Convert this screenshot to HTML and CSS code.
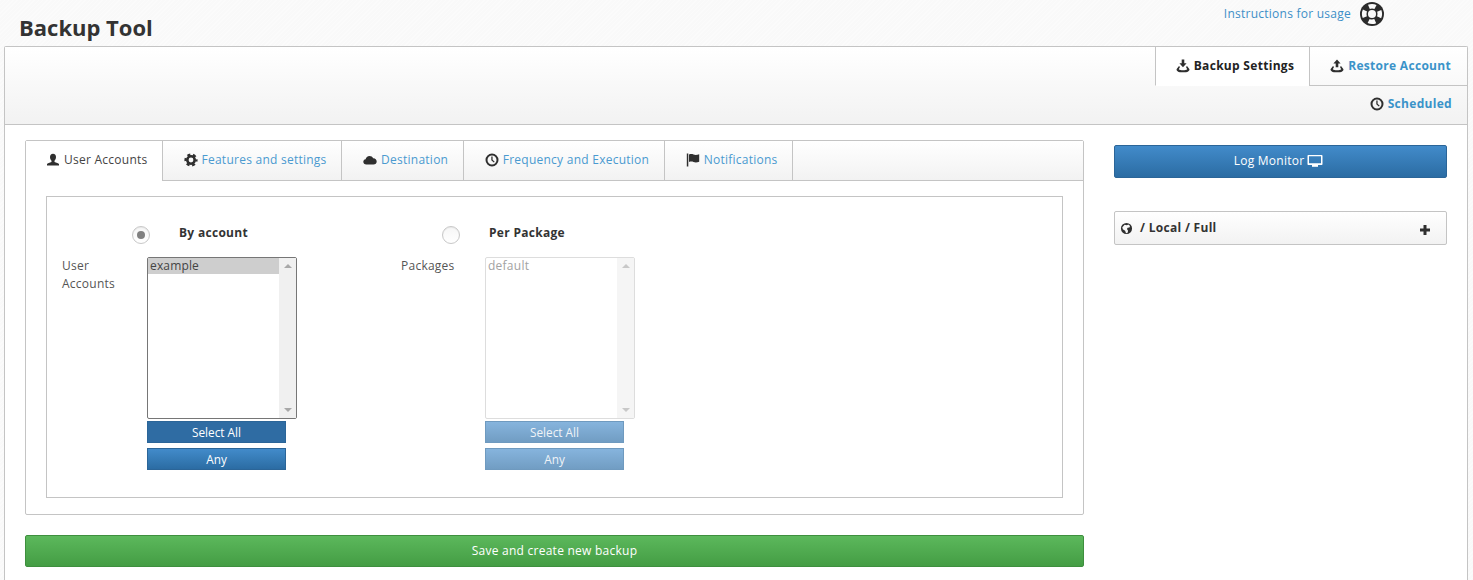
FILE: index.html
```html
<!DOCTYPE html>
<html lang="en">
<head>
<meta charset="utf-8">
<title>Backup Tool</title>
<link rel="stylesheet" href="styles.css">
</head>
<body>
<svg class="defs" width="0" height="0" aria-hidden="true">
  <defs>
    <symbol id="i-tray-down" viewBox="0 0 14 14"><path d="M5.700.5h2.600v3.700h2.300L7 8.300 3.400 4.200h2.300z"/><path d="M3 7 .5 10.300c0 1.700 1.700 2.900 3.500 2.900h6c1.800 0 3.500-1.200 3.500-2.900L11 7l-1 1.100 1.200 2.200c-.9.800-2.200 1-4.200 1s-3.300-.2-4.200-1L4 8.100z"/></symbol>
    <symbol id="i-tray-up" viewBox="0 0 14 14"><path d="M7 .5l3.600 4.100H8.300v3.700H5.700V4.600H3.400z"/><path d="M3 7 .5 10.300c0 1.700 1.700 2.900 3.500 2.900h6c1.800 0 3.500-1.200 3.500-2.900L11 7l-1 1.100 1.200 2.200c-.9.800-2.200 1-4.200 1s-3.300-.2-4.200-1L4 8.100z"/></symbol>
    <symbol id="i-clock" viewBox="0 0 14 14"><path fill-rule="evenodd" d="M7 .5a6.500 6.500 0 1 0 0 13 6.500 6.500 0 0 0 0-13zm0 2a4.500 4.500 0 1 1 0 9 4.500 4.500 0 0 1 0-9z"/><path d="M6.300 3.500h1.300v3.200l2.100 2-.9.900-2.500-2.400z"/></symbol>
    <symbol id="i-user" viewBox="0 0 14 14"><path d="M7 .8c2 0 3 1.400 3 3.300 0 1.600-.8 3-1.500 3.700v1.100c1.800.5 4 1.200 4.500 2.100v1.500H1V11c.5-.9 2.700-1.600 4.500-2.100V7.800C4.800 7.100 4 5.700 4 4.100 4 2.200 5 .8 7 .8z"/></symbol>
    <symbol id="i-gear" viewBox="0 0 14 14"><circle cx="7" cy="7" r="3.700" fill="none" stroke="#2f2f2f" stroke-width="2.600"/><circle cx="7" cy="7" r="5.500" fill="none" stroke="#2f2f2f" stroke-width="2.200" stroke-dasharray="3 2.760" stroke-dashoffset="1.500"/></symbol>
    <symbol id="i-cloud" viewBox="0 0 14 14"><path d="M3.300 11.500C1.500 11.500.3 10.300.3 8.800c0-1.400 1-2.400 2.300-2.600C3 4.400 4.500 3 6.500 3c1.700 0 3 .9 3.600 2.300 2-.2 3.600 1.300 3.600 3.100 0 1.800-1.400 3.100-3.200 3.100z"/></symbol>
    <symbol id="i-flag" viewBox="0 0 14 14"><path d="M.8.500h1.500v13H.8z"/><path d="M3 1.500c1.500-.5 3-.6 4.500 0s3.500.5 5.700-.2v7.500c-2.200.8-4.200.8-5.700.2s-3-.5-4.500 0z"/></symbol>
    <symbol id="i-monitor" viewBox="0 0 16 14"><path fill-rule="evenodd" d="M1.500 1h13c.6 0 1 .4 1 1v8c0 .6-.4 1-1 1h-13c-.6 0-1-.4-1-1V2c0-.6.4-1 1-1zM2 2.200v7h12v-7z"/><path d="M5 11h6v1.800H5z"/></symbol>
    <symbol id="i-globe" viewBox="0 0 14 14"><path fill-rule="evenodd" d="M7 1a6 6 0 1 0 0 12A6 6 0 0 0 7 1zM5 3l2.500.5L9 2.800l1.800 1.400-.6 1.700-2 .3-.7 1.300 1.200 1.800-.5 2.200-1.700.5-1-2.500-2.500-1.600-.5-2.300z"/></symbol>
    <symbol id="i-plus" viewBox="0 0 12 12"><path d="M4.500 1h3v3.500H11v3H7.500V11h-3V7.500H1v-3h3.500z"/></symbol>
  </defs>
</svg>

<header class="top">
  <h1 class="title">Backup Tool</h1>
  <div class="help">
    <a class="link" href="#">Instructions for usage</a>
    <svg class="lifebuoy" viewBox="0 0 26 26" width="26" height="26" aria-hidden="true">
      <circle cx="13" cy="13" r="12" fill="#2b2b2b"/>
      <circle cx="13" cy="13" r="7.800" fill="none" stroke="#fafafa" stroke-width="4.600" stroke-dasharray="6.800 5.450" stroke-dashoffset="3.400"/>
      <circle cx="13" cy="13" r="4" fill="#fafafa"/>
    </svg>
  </div>
</header>

<main class="panel">
  <div class="panel-head">
    <nav class="main-tabs">
      <a class="main-tab active" href="#"><svg class="ico"><use href="#i-tray-down"/></svg>Backup Settings</a>
      <a class="main-tab" href="#"><svg class="ico"><use href="#i-tray-up"/></svg><span class="blue">Restore Account</span></a>
    </nav>
    <div class="sched-row">
      <a class="sched" href="#"><svg class="ico"><use href="#i-clock"/></svg><span class="blue">Scheduled</span></a>
    </div>
  </div>

  <div class="content">
    <section class="left">
      <div class="tabbox">
        <nav class="tabs">
          <a class="tab active" href="#"><svg class="ico"><use href="#i-user"/></svg>User Accounts</a>
          <a class="tab" href="#"><svg class="ico"><use href="#i-gear"/></svg><span class="light">Features and settings</span></a>
          <a class="tab" href="#"><svg class="ico"><use href="#i-cloud"/></svg><span class="light">Destination</span></a>
          <a class="tab" href="#"><svg class="ico"><use href="#i-clock"/></svg><span class="light">Frequency and Execution</span></a>
          <a class="tab" href="#"><svg class="ico"><use href="#i-flag"/></svg><span class="light">Notifications</span></a>
        </nav>
        <div class="tabbody">
          <div class="formbox">
            <div class="group first">
              <div class="choice">
                <span class="radio checked"></span>
                <strong class="choice-label">By account</strong>
              </div>
              <div class="field">
                <span class="field-label">User Accounts</span>
                <div class="field-main">
                  <div class="listbox">
                    <ul class="options"><li class="option selected">example</li></ul>
                    <div class="scroll"><span class="arrow up"></span><span class="arrow down"></span></div>
                  </div>
                  <button class="btn small dark" type="button">Select All</button>
                  <button class="btn small" type="button">Any</button>
                </div>
              </div>
            </div>
            <div class="group second">
              <div class="choice">
                <span class="radio"></span>
                <strong class="choice-label">Per Package</strong>
              </div>
              <div class="field">
                <span class="field-label">Packages</span>
                <div class="field-main">
                  <div class="listbox disabled">
                    <ul class="options"><li class="option">default</li></ul>
                    <div class="scroll"><span class="arrow up"></span><span class="arrow down"></span></div>
                  </div>
                  <button class="btn small off" type="button">Select All</button>
                  <button class="btn small off" type="button">Any</button>
                </div>
              </div>
            </div>
          </div>
        </div>
      </div>
      <button class="btn save" type="button">Save and create new backup</button>
    </section>

    <aside class="right">
      <button class="btn monitor" type="button">Log Monitor <svg class="ico mon"><use href="#i-monitor"/></svg></button>
      <div class="accordion">
        <svg class="ico"><use href="#i-globe"/></svg>
        <strong class="acc-title">/ Local / Full</strong>
        <svg class="plus"><use href="#i-plus"/></svg>
      </div>
    </aside>
  </div>
</main>
</body>
</html>
```

FILE: styles.css
```css
* { box-sizing: border-box; }

html, body { margin: 0; padding: 0; height: 100%; overflow: hidden; }

body {
  background-color: #fafafa;
  background-image: repeating-linear-gradient(135deg, #fbfbfb 0 1px, #f9f9f9 1px 3px);
  color: #333;
  font-family: "Open Sans", "Liberation Sans", sans-serif;
  font-size: 12px;
  line-height: 18px;
  letter-spacing: .25px;
}

a { text-decoration: none; color: inherit; }

strong { letter-spacing: .3px; }

.defs { position: absolute; }

.top {
  height: 46px;
  display: flex;
  justify-content: space-between;
  padding: 0 88px 0 19px;
}

.title {
  margin: 12px 0 0;
  font-size: 22px;
  line-height: 30px;
  font-weight: 700;
  color: #333;
  letter-spacing: 0;
}

.help {
  display: flex;
  align-items: flex-start;
  padding-top: 1px;
}

.link {
  color: #3d8fc7;
  font-size: 12px;
  line-height: 25px;
  margin-right: 8px;
}

.lifebuoy { display: block; }

.panel {
  margin: 0 5px 0 4px;
  height: 534px;
  background: #fff;
  border: 1px solid #c4c4c4;
  border-bottom: 0;
  border-radius: 2px 2px 0 0;
}

.panel-head {
  height: 78px;
  background: linear-gradient(#fff, #f2f2f2);
  border-bottom: 1px solid #c4c4c4;
}

.main-tabs {
  display: flex;
  justify-content: flex-end;
  height: 39px;
}

.main-tab {
  display: flex;
  align-items: center;
  height: 39px;
  padding: 0 16px 0 20px;
  font-weight: 700;
  font-size: 12px;
  letter-spacing: .3px;
  color: #222;
  border-left: 1px solid #c4c4c4;
  border-bottom: 1px solid #c4c4c4;
}

.main-tab.active {
  background: #fff;
  border-bottom-color: #fff;
  padding: 0 15px 0 20px;
}

.main-tab .ico { margin-right: 4px; }

.blue { color: #3a93c9; }

.sched-row {
  display: flex;
  justify-content: flex-end;
  padding: 9px 15px 0 0;
}

.sched {
  display: flex;
  align-items: center;
  font-weight: 700;
  font-size: 12px;
  letter-spacing: .3px;
}

.sched .ico { margin-right: 4px; }

.ico {
  width: 14px;
  height: 14px;
  fill: #2f2f2f;
  flex: none;
}

.content {
  display: flex;
  padding: 15px 20px 0;
  gap: 30px;
}

.left { width: 1059px; flex: none; }

.tabbox {
  height: 375px;
  border: 1px solid #c4c4c4;
  border-radius: 2px;
}

.tabs {
  display: flex;
  height: 40px;
  background: linear-gradient(#fff, #f2f2f2);
  border-bottom: 1px solid #c4c4c4;
}

.tab {
  display: flex;
  align-items: center;
  height: 40px;
  padding: 0 14.500px 2px 21px;
  border-right: 1px solid #c4c4c4;
  font-size: 12px;
  color: #444;
}

.tab .ico { margin-right: 4px; }

.tab.active {
  background: #fff;
  padding-left: 20px;
  padding-right: 14px;
}

.light { color: #4a9ad0; }

.tabbody { padding: 15px 20px 0; }

.formbox {
  display: flex;
  height: 302px;
  width: 1017px;
  border: 1px solid #c4c4c4;
  padding: 0 0 0 15px;
}

.group { flex: none; }
.group.first { width: 339px; }

.choice {
  display: flex;
  height: 60px;
}

.first .choice { padding-left: 70px; }
.second .choice { padding-left: 41px; }

.radio {
  width: 18px;
  height: 18px;
  margin-top: 29px;
  border: 1px solid #c8c8c8;
  border-radius: 50%;
  background: linear-gradient(#f6f6f6, #fff);
  box-shadow: inset 0 1px 1px rgba(0, 0, 0, .06);
  display: flex;
  align-items: center;
  justify-content: center;
  flex: none;
}

.radio.checked::after {
  content: "";
  width: 8px;
  height: 8px;
  border-radius: 50%;
  background: #808080;
}

.choice-label {
  margin: 27px 0 0 29px;
  font-size: 12px;
  line-height: 18px;
  color: #333;
}

.field { display: flex; }

.field-label {
  width: 85px;
  flex: none;
  color: #555;
}

.second .field-label { width: 84px; }

.first .field-label { padding-right: 30px; }

.field-main { width: 150px; }

.listbox {
  display: flex;
  justify-content: space-between;
  height: 162px;
  width: 150px;
  background: #fff;
  border: 1px solid #767676;
  border-radius: 2px;
}

.listbox.disabled {
  border-color: #ddd;
  color: #999;
}

.options {
  list-style: none;
  margin: 0;
  padding: 0;
  flex: 1;
}

.option {
  height: 16px;
  line-height: 16px;
  padding-left: 2px;
  letter-spacing: .15px;
  color: #444;
}

.option.selected { background: #cecece; }

.disabled .option { color: #a3a3a3; letter-spacing: .25px; }

.scroll {
  width: 17px;
  background: #f0f0f0;
  display: flex;
  flex-direction: column;
  justify-content: space-between;
  align-items: center;
  padding: 6px 0;
}

.disabled .scroll { background: #f5f5f5; }

.arrow {
  width: 0;
  height: 0;
  border-left: 4px solid transparent;
  border-right: 4px solid transparent;
}

.arrow.up { border-bottom: 4px solid #a8a8a8; }
.arrow.down { border-top: 4px solid #a8a8a8; }

.disabled .arrow.up { border-bottom-color: #c8c8c8; }
.disabled .arrow.down { border-top-color: #c8c8c8; }

.btn {
  display: block;
  font-family: inherit;
  letter-spacing: .25px;
  color: #fff;
  border: 1px solid #2b6598;
  border-radius: 2px;
  background: linear-gradient(#428bca, #2b6ca3);
  cursor: pointer;
  padding: 0 0 2px;
}

.btn.small {
  width: 139px;
  height: 22px;
  font-size: 11.800px;
  letter-spacing: 0;
  line-height: 18px;
  margin-top: 2px;
  padding: 0 0 1px;
  border-radius: 0;
}

.btn.small + .btn.small { margin-top: 5px; }

.btn.dark { background: #2f6ca3; }

.btn.off {
  background: linear-gradient(#86b4dd, #719dc3);
  border-color: #6f9abf;
  color: #f0f4f8;
}

.btn.save {
  width: 100%;
  height: 32px;
  margin-top: 20px;
  font-size: 12px;
  background: linear-gradient(#5cb85c, #449d44);
  border-color: #3e8f3e;
}

.right {
  width: 333px;
  flex: none;
}

.btn.monitor {
  width: 100%;
  height: 33px;
  margin-top: 5px;
  padding-right: 4px;
  font-size: 12px;
  display: flex;
  align-items: center;
  justify-content: center;
  gap: 3px;
}

.mon { width: 16px; fill: #fff; }

.accordion {
  display: flex;
  align-items: center;
  height: 34px;
  margin-top: 33px;
  padding: 0 15px 0 5px;
  border: 1px solid #c4c4c4;
  border-radius: 2px;
  background: linear-gradient(#fff, #f2f2f2);
}

.accordion .ico { width: 13px; height: 13px; }

.acc-title {
  margin-left: 7px;
  flex: 1;
  font-size: 12px;
}

.plus {
  width: 12px;
  height: 12px;
  fill: #2f2f2f;
  margin-top: 3px;
}
```
